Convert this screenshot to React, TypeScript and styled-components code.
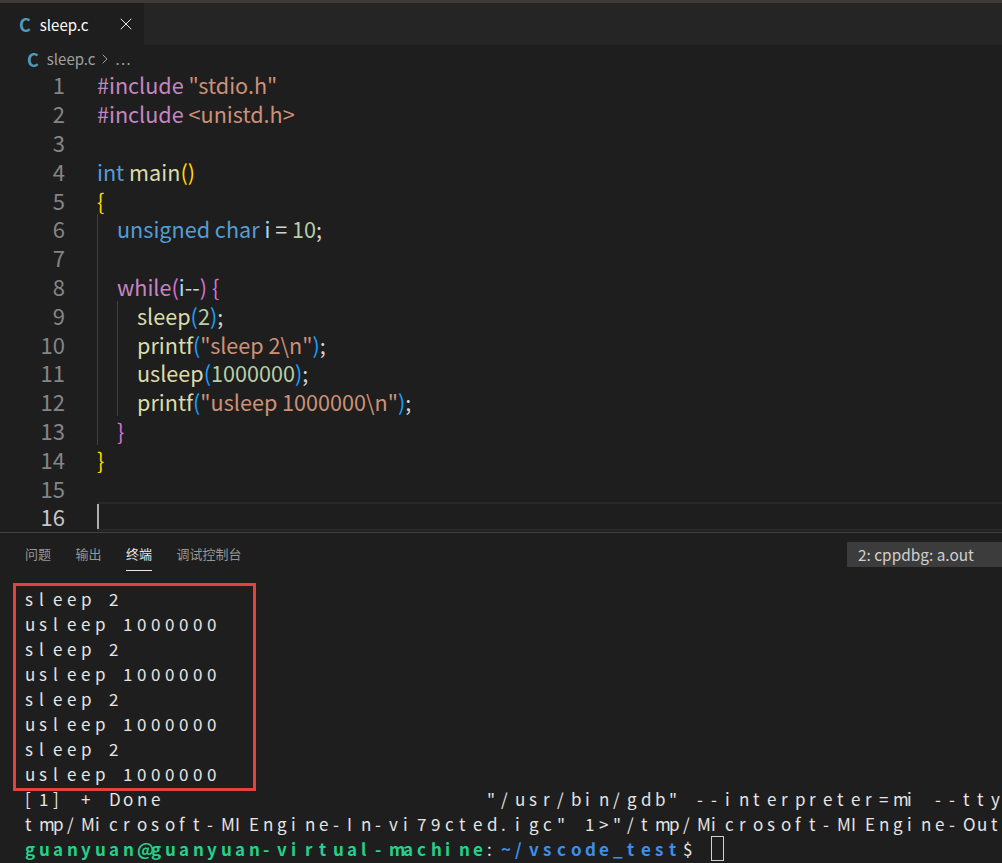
import { ReactNode } from "react";
import styled, { createGlobalStyle } from "styled-components";
import { ChevronRight, X } from "lucide-react";

const FONT = `"Noto Sans CJK SC", "Noto Sans", sans-serif`;

const GlobalStyle = createGlobalStyle`
  html, body {
    margin: 0;
    padding: 0;
    background: #1e1e1e;
    overflow: hidden;
  }
  * { box-sizing: border-box; }
`;

const Window = styled.div`
  width: 1002px;
  height: 863px;
  display: flex;
  flex-direction: column;
  overflow: hidden;
  background: #1e1e1e;
  border-top: 3px solid #3d3b37;
  font-family: ${FONT};
`;

const TabBar = styled.div`
  display: flex;
  height: 42px;
  flex: none;
  background: #252526;
`;

const Tab = styled.div`
  display: flex;
  align-items: center;
  width: 144px;
  padding-left: 19px;
  background: #1e1e1e;
  color: #ffffff;
  font-size: 15px;
`;

const FileIcon = styled.span<{ $size: number }>`
  color: #519aba;
  font-weight: 700;
  font-size: ${p => p.$size}px;
  line-height: 1;
`;

const TabName = styled.span`
  margin-left: 9px;
`;

const CloseIcon = styled(X)`
  margin-left: 28px;
  margin-top: -1px;
  color: #e8e8e8;
`;

const Breadcrumb = styled.div`
  display: flex;
  align-items: center;
  height: 25px;
  flex: none;
  padding: 2px 0 0 27px;
  color: #a0a0a0;
  font-size: 15px;
`;

const CrumbName = styled.span`
  margin-left: 8px;
`;

const CrumbChevron = styled(ChevronRight)`
  margin-left: 2px;
`;

const CrumbMore = styled.span`
  margin-left: 2px;
  letter-spacing: 1.4px;
`;

const Editor = styled.div`
  display: flex;
  height: 462px;
  flex: none;
  padding-top: 0.35px;
`;

const Gutter = styled.div`
  width: 97px;
  flex: none;
  padding-right: 32px;
  text-align: right;
`;

const LineNumber = styled.div<{ $active?: boolean }>`
  height: 28.8px;
  line-height: 28.8px;
  font-size: 22px;
  color: ${p => (p.$active ? "#c6c6c6" : "#858585")};
`;

const Code = styled.div`
  flex: 1;
  min-width: 0;
`;

const Line = styled.div`
  height: 28.8px;
  padding-top: 1px;
  line-height: 28.8px;
  font-size: 21.6px;
  white-space: pre;
  color: #d4d4d4;
`;

const Indent = styled.div`
  padding-left: 19px;
  border-left: 1px solid #404040;
`;

const CurrentLine = styled.div`
  height: 28.8px;
  border-top: 2px solid #282828;
  border-bottom: 2px solid #282828;
`;

const Cursor = styled.div`
  width: 2px;
  height: 100%;
  background: #aeafad;
`;

const Tok = styled.span<{ $c: string }>`
  color: ${p => p.$c};
`;

const Panel = styled.div`
  flex: 1;
  min-height: 0;
  border-top: 1px solid #414141;
  display: flex;
  flex-direction: column;
`;

const PanelHeader = styled.div`
  display: flex;
  align-items: flex-start;
  justify-content: space-between;
  height: 53px;
  flex: none;
  padding-left: 25px;
`;

const PanelTabs = styled.div`
  display: flex;
  gap: 24.5px;
  padding-top: 8px;
`;

const PanelTab = styled.div<{ $active?: boolean }>`
  height: 30px;
  line-height: 25px;
  font-size: 13px;
  color: ${p => (p.$active ? "#e7e7e7" : "#969696")};
  border-bottom: 1px solid ${p => (p.$active ? "#e7e7e7" : "transparent")};
`;

const TerminalSelect = styled.div`
  width: 155px;
  height: 25px;
  margin-top: 9px;
  padding-left: 11px;
  line-height: 24px;
  font-size: 15.4px;
  color: #d0d0d0;
  background: #3c3c3c;
`;

const Terminal = styled.div`
  padding-left: 25px;
`;

const Highlight = styled.div`
  position: relative;

  &::after {
    content: "";
    box-sizing: border-box;
    position: absolute;
    top: -3px;
    bottom: -5px;
    left: -12px;
    width: 243px;
    border: 3px solid #e8403f;
    pointer-events: none;
  }
`;

const Row = styled.div`
  display: flex;
  height: 25px;
  line-height: 25px;
  font-size: 17px;
  white-space: pre;
  color: #e5e5e5;
`;

const Cell = styled.span<{ $c?: string; $bold?: boolean }>`
  display: inline-block;
  width: 14px;
  flex: none;
  color: ${p => p.$c ?? "inherit"};
  font-weight: ${p => (p.$bold ? 700 : 400)};
`;

const TermCursor = styled.span`
  width: 13px;
  height: 25px;
  flex: none;
  border: 1px solid #d0d0d0;
`;

const Cells = ({ text, c, bold }: { text: string; c?: string; bold?: boolean }) => (
  <>
    {Array.from(text).map((ch, i) => (
      <Cell key={i} $c={c} $bold={bold}>
        {ch}
      </Cell>
    ))}
  </>
);

const C = {
  pre: "#c586c0",
  str: "#ce9178",
  kw: "#569cd6",
  fn: "#dcdcaa",
  gold: "#ffd700",
  pink: "#da70d6",
  blue: "#179fff",
  v: "#9cdcfe",
  num: "#b5cea8",
};

const Printf = ({ text }: { text: string }) => (
  <Line>
    <Tok $c={C.fn}>printf</Tok>
    <Tok $c={C.blue}>(</Tok>
    <Tok $c={C.str}>
      "{text}
      {"\\n"}"
    </Tok>
    <Tok $c={C.blue}>)</Tok>;
  </Line>
);

const codeLines: ReactNode = (
  <>
    <Line>
      <Tok $c={C.pre}>#include</Tok> <Tok $c={C.str}>"stdio.h"</Tok>
    </Line>
    <Line>
      <Tok $c={C.pre}>#include</Tok> <Tok $c={C.str}>{"<unistd.h>"}</Tok>
    </Line>
    <Line />
    <Line>
      <Tok $c={C.kw}>int</Tok> <Tok $c={C.fn}>main</Tok>
      <Tok $c={C.gold}>()</Tok>
    </Line>
    <Line>
      <Tok $c={C.gold}>{"{"}</Tok>
    </Line>
    <Indent>
      <Line>
        <Tok $c={C.kw}>unsigned char</Tok> <Tok $c={C.v}>i</Tok> = <Tok $c={C.num}>10</Tok>;
      </Line>
      <Line />
      <Line>
        <Tok $c={C.pre}>while</Tok>
        <Tok $c={C.pink}>(</Tok>
        <Tok $c={C.v}>i</Tok>--
        <Tok $c={C.pink}>)</Tok> <Tok $c={C.pink}>{"{"}</Tok>
      </Line>
      <Indent>
        <Line>
          <Tok $c={C.fn}>sleep</Tok>
          <Tok $c={C.blue}>(</Tok>
          <Tok $c={C.num}>2</Tok>
          <Tok $c={C.blue}>)</Tok>;
        </Line>
        <Printf text="sleep 2" />
        <Line>
          <Tok $c={C.fn}>usleep</Tok>
          <Tok $c={C.blue}>(</Tok>
          <Tok $c={C.num}>1000000</Tok>
          <Tok $c={C.blue}>)</Tok>;
        </Line>
        <Printf text="usleep 1000000" />
      </Indent>
      <Line>
        <Tok $c={C.pink}>{"}"}</Tok>
      </Line>
    </Indent>
    <Line>
      <Tok $c={C.gold}>{"}"}</Tok>
    </Line>
    <Line />
    <CurrentLine>
      <Cursor />
    </CurrentLine>
  </>
);

const output = ["sleep 2", "usleep 1000000", "sleep 2", "usleep 1000000", "sleep 2", "usleep 1000000", "sleep 2", "usleep 1000000"];
const panelTabs = ["问题", "输出", "终端", "调试控制台"];

export default function App() {
  return (
    <Window>
      <GlobalStyle />
      <TabBar>
        <Tab>
          <FileIcon $size={18}>C</FileIcon>
          <TabName>sleep.c</TabName>
          <CloseIcon size={20} strokeWidth={1.2} />
        </Tab>
      </TabBar>
      <Breadcrumb>
        <FileIcon $size={18}>C</FileIcon>
        <CrumbName>sleep.c</CrumbName>
        <CrumbChevron size={16} strokeWidth={1.5} />
        <CrumbMore>...</CrumbMore>
      </Breadcrumb>
      <Editor>
        <Gutter>
          {Array.from({ length: 16 }, (_, i) => (
            <LineNumber key={i} $active={i === 15}>
              {i + 1}
            </LineNumber>
          ))}
        </Gutter>
        <Code>{codeLines}</Code>
      </Editor>
      <Panel>
        <PanelHeader>
          <PanelTabs>
            {panelTabs.map(t => (
              <PanelTab key={t} $active={t === "终端"}>
                {t}
              </PanelTab>
            ))}
          </PanelTabs>
          <TerminalSelect>2: cppdbg: a.out</TerminalSelect>
        </PanelHeader>
        <Terminal>
          <Highlight>
            {output.map((l, i) => (
              <Row key={i}>
                <Cells text={l} />
              </Row>
            ))}
          </Highlight>
          <Row>
            <Cells text={`[1] + Done${" ".repeat(23)}"/usr/bin/gdb" --interpreter=mi --tty`} />
          </Row>
          <Row>
            <Cells text={`tmp/Microsoft-MIEngine-In-vi79cted.igc" 1>"/tmp/Microsoft-MIEngine-Out`} />
          </Row>
          <Row>
            <Cells text="guanyuan@guanyuan-virtual-machine" c="#23d18b" bold />
            <Cells text=":" />
            <Cells text="~/vscode_test" c="#3b8eea" bold />
            <Cells text="$ " />
            <TermCursor />
          </Row>
        </Terminal>
      </Panel>
    </Window>
  );
}
